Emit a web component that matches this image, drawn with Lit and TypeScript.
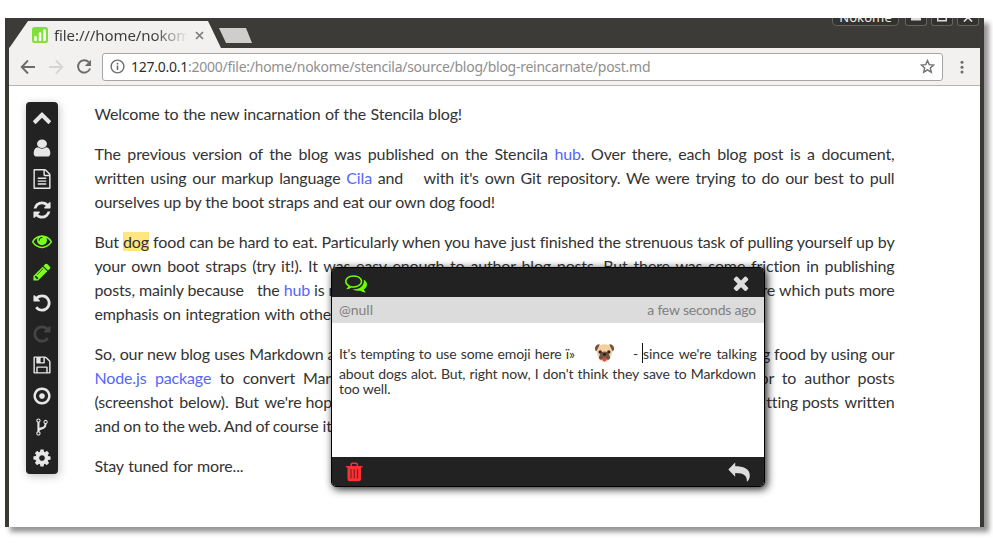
import { LitElement, html, css, svg } from "lit";
import { customElement } from "lit/decorators.js";
import { classMap } from "lit/directives/class-map.js";
import { styleMap } from "lit/directives/style-map.js";

const ICONS: Record<string, string> = {
  up: "M1683 1331l-166 165q-19 19-45 19t-45-19l-531-531-531 531q-19 19-45 19t-45-19l-166-165q-19-19-19-45.5t19-45.5l742-741q19-19 45-19t45 19l742 741q19 19 19 45.5t-19 45.5z",
  user: "M1536 1399q0 109-62.5 187t-150.5 78h-854q-88 0-150.5-78t-62.5-187q0-85 8.5-160.5t31.5-152 58.5-131 94-89 134.5-34.5q131 128 313 128t313-128q76 0 134.5 34.5t94 89 58.5 131 31.5 152 8.5 160.5zm-256-887q0 159-112.5 271.5t-271.5 112.5-271.5-112.5-112.5-271.5 112.5-271.5 271.5-112.5 271.5 112.5 112.5 271.5z",
  file: "M1596 380q28 28 48 76t20 88v1152q0 40-28 68t-68 28h-1344q-40 0-68-28t-28-68v-1600q0-40 28-68t68-28h896q40 0 88 20t76 48zm-444-244v376h376q-10-29-22-41l-313-313q-12-12-41-22zm384 1528v-1024h-416q-40 0-68-28t-28-68v-416h-768v1536h1280zm-1024-864q0-14 9-23t23-9h704q14 0 23 9t9 23v64q0 14-9 23t-23 9h-704q-14 0-23-9t-9-23v-64zm736 224q14 0 23 9t9 23v64q0 14-9 23t-23 9h-704q-14 0-23-9t-9-23v-64q0-14 9-23t23-9h704zm0 256q14 0 23 9t9 23v64q0 14-9 23t-23 9h-704q-14 0-23-9t-9-23v-64q0-14 9-23t23-9h704z",
  refresh: "M1639 1056q0 5-1 7-64 268-268 434.5t-478 166.5q-146 0-282.5-55t-243.5-157l-129 129q-19 19-45 19t-45-19-19-45v-448q0-26 19-45t45-19h448q26 0 45 19t19 45-19 45l-137 137q71 66 161 102t187 36q134 0 250-65t186-179q11-17 53-117 8-23 30-23h192q13 0 22.5 9.5t9.5 22.5zm25-800v448q0 26-19 45t-45 19h-448q-26 0-45-19t-19-45 19-45l138-138q-148-137-349-137-134 0-250 65t-186 179q-11 17-53 117-8 23-30 23h-199q-13 0-22.5-9.5t-9.5-22.5v-7q65-268 270-434.5t480-166.5q146 0 284 55.5t245 156.5l130-129q19-19 45-19t45 19 19 45z",
  eye: "M1664 960q-152-236-381-353 61 104 61 225 0 185-131.5 316.5t-316.5 131.5-316.5-131.5-131.5-316.5q0-121 61-225-229 117-381 353 133 205 333.5 326.5t434.5 121.5 434.5-121.5 333.5-326.5zm-720-384q0-20-14-34t-34-14q-125 0-214.5 89.5t-89.5 214.5q0 20 14 34t34 14 34-14 14-34q0-86 61-147t147-61q20 0 34-14t14-34zm848 384q0 34-20 69-140 230-376.5 368.5t-499.5 138.5-499.5-139-376.5-368q-20-35-20-69t20-69q140-229 376.5-368t499.5-139 499.5 139 376.5 368q20 35 20 69z",
  pencil: "M491 1536l91-91-235-235-91 91v107h128v128h107zm523-928q0-22-22-22-10 0-17 7l-542 542q-7 7-7 17 0 22 22 22 10 0 17-7l542-542q7-7 7-17zm-54-192l416 416-832 832h-416v-416zm683 96q0 53-37 90l-166 166-416-416 166-165q36-38 90-38 53 0 91 38l235 234q37 39 37 91z",
  undo: "M1664 896q0 156-61 298t-164 245-245 164-298 61q-172 0-327-72.5t-264-204.5q-7-10-6.5-22.5t8.5-20.5l137-138q10-9 25-9 16 2 23 12 73 95 179 147t225 52q104 0 198.5-40.5t163.5-109.5 109.5-163.5 40.5-198.5-40.5-198.5-109.5-163.5-163.5-109.5-198.5-40.5q-98 0-188 35.5t-160 101.5l137 138q31 30 14 69-17 40-59 40h-448q-26 0-45-19t-19-45v-448q0-42 40-59 39-17 69 14l130 129q107-101 244.5-156.5t284.5-55.5q156 0 298 61t245 164 164 245 61 298z",
  save: "M512 1536h768v-384h-768v384zm896 0h128v-896q0-14-10-38.5t-20-34.5l-281-281q-10-10-34-20t-39-10v416q0 40-28 68t-68 28h-576q-40 0-68-28t-28-68v-416h-128v1280h128v-416q0-40 28-68t68-28h832q40 0 68 28t28 68v416zm-384-928v-320q0-13-9.5-22.5t-22.5-9.5h-192q-13 0-22.5 9.5t-9.5 22.5v320q0 13 9.5 22.5t22.5 9.5h192q13 0 22.5-9.5t9.5-22.5zm640 32v928q0 40-28 68t-68 28h-1344q-40 0-68-28t-28-68v-1344q0-40 28-68t68-28h928q40 0 88 20t76 48l280 280q28 28 48 76t20 88z",
  dot: "M1152 896q0 106-75 181t-181 75-181-75-75-181 75-181 181-75 181 75 75 181zm-256-544q-148 0-273 73t-198 198-73 273 73 273 198 198 273 73 273-73 198-198 73-273-73-273-198-198-273-73zm768 544q0 209-103 385.5t-279.5 279.5-385.5 103-385.5-103-279.5-279.5-103-385.5 103-385.5 279.5-279.5 385.5-103 385.5 103 279.5 279.5 103 385.5z",
  fork: "M672 1472q0-40-28-68t-68-28-68 28-28 68 28 68 68 28 68-28 28-68zm0-1152q0-40-28-68t-68-28-68 28-28 68 28 68 68 28 68-28 28-68zm640 128q0-40-28-68t-68-28-68 28-28 68 28 68 68 28 68-28 28-68zm96 0q0 52-26 96.5t-70 69.5q-2 287-226 414-67 38-203 81-128 40-169.5 71t-41.5 100v26q44 25 70 69.5t26 96.5q0 80-56 136t-136 56-136-56-56-136q0-52 26-96.5t70-69.5v-820q-44-25-70-69.5t-26-96.5q0-80 56-136t136-56 136 56 56 136q0 52-26 96.5t-70 69.5v497q54-26 154-57 55-17 87.5-29.5t70.5-31 59-39.5 40.5-51 28-69.5 8.5-91.5q-44-25-70-69.5t-26-96.5q0-80 56-136t136-56 136 56 56 136z",
  cog: "M1152 896q0-106-75-181t-181-75-181 75-75 181 75 181 181 75 181-75 75-181zm512-109v222q0 12-8 23t-20 13l-185 28q-19 54-39 91 35 50 107 138 10 12 10 25t-9 23q-27 37-99 108t-94 71q-12 0-26-9l-138-108q-44 23-91 38-16 136-29 186-7 28-36 28h-222q-14 0-24.5-8.5t-11.5-21.5l-28-184q-49-16-90-37l-141 107q-10 9-25 9-14 0-25-11-126-114-165-168-7-10-7-23 0-12 8-23 15-21 51-66.5t54-70.5q-27-50-41-99l-183-27q-13-2-21-12.5t-8-23.5v-222q0-12 8-23t19-13l186-28q14-46 39-92-40-57-107-138-10-12-10-24 0-10 9-23 26-36 98.5-107.5t94.5-71.5q13 0 26 10l138 107q44-23 91-38 16-136 29-186 7-28 36-28h222q14 0 24.5 8.5t11.5 21.5l28 184q49 16 90 37l142-107q9-9 24-9 13 0 25 10 129 119 165 170 7 8 7 22 0 12-8 23-15 21-51 66.5t-54 70.5q26 50 41 98l183 28q13 2 21 12.5t8 23.5z",
  comments: "M704 384q-153 0-286 52t-211.5 141-78.5 191q0 82 53 158t149 132l97 56-35 84q34-20 62-39l44-31 53 10q78 14 153 14 153 0 286-52t211.5-141 78.5-191-78.5-191-211.5-141-286-52zm0-128q191 0 353.5 68.5t256.5 186.5 94 257-94 257-256.5 186.5-353.5 68.5q-86 0-176-16-124 88-278 128-36 9-86 16h-3q-11 0-20.5-8t-11.5-21q-1-3-1-6.5t.5-6.5 2-6l2.5-5 3.5-5.5 4-5 4.5-5 4-4.5q5-6 23-25t26-29.5 22.5-29 25-38.5 20.5-44q-124-72-195-177t-71-224q0-139 94-257t256.5-186.5 353.5-68.5zm822 1169q10 24 20.5 44t25 38.5 22.5 29 26 29.5 23 25q1 1 4 4.5t4.5 5 4 5 3.5 5.5l2.5 5 2 6 .5 6.5-1 6.5q-3 14-13 22t-22 7q-50-7-86-16-154-40-278-128-90 16-176 16-271 0-472-132 58 4 88 4 161 0 309-45t264-129q125-92 192-212t67-254q0-77-23-152 129 71 204 178t75 230q0 120-71 224.5t-195 176.5z",
  times: "M1490 1322q0 40-28 68l-136 136q-28 28-68 28t-68-28l-294-294-294 294q-28 28-68 28t-68-28l-136-136q-28-28-28-68t28-68l294-294-294-294q-28-28-28-68t28-68l136-136q28-28 68-28t68 28l294 294 294-294q28-28 68-28t68 28l136 136q28 28 28 68t-28 68l-294 294 294 294q28 28 28 68z",
};

const TOOLS: Array<{ icon: string; kind?: string }> = [
  { icon: "up" },
  { icon: "user", kind: "wide" },
  { icon: "file" },
  { icon: "refresh" },
  { icon: "eye", kind: "active" },
  { icon: "pencil", kind: "active" },
  { icon: "undo" },
  { icon: "undo", kind: "redo" },
  { icon: "save" },
  { icon: "dot" },
  { icon: "fork" },
  { icon: "cog" },
];

const icon = (name: string, size = 20, kind = "") => html`<svg
  class=${classMap({ icon: true, [kind || "plain"]: true })}
  width=${size}
  height=${size}
  viewBox="0 0 1792 1792"
><path d=${ICONS[name]}></path></svg>`;

/* A run of words stretched to a measured width. */
const run = (width: number, content: unknown) =>
  html`<span class="run" style=${styleMap({ width: `${width}px` })}>${content}</span>`;

const gap = (width: number) =>
  html`<span class="gap" style=${styleMap({ width: `${width}px` })}></span>`;

const pug = svg`
  <path d="M4 3Q10 -.5 16 3Q18.500 7 17 12Q15.500 18.500 10 19Q4.500 18.500 3 12Q1.500 7 4 3Z" fill="#f3cfa0"/>
  <path d="M5.300 1.400Q1.800 .8 .4 5Q.2 7.800 1.800 8.400Q3.600 5 5.300 1.400ZM14.700 1.400Q18.200 .8 19.600 5Q19.800 7.800 18.200 8.400Q16.400 5 14.700 1.400Z" fill="#7b5237"/>
  <path d="M10 8.500Q13 8.500 14.500 11.500Q16.500 15 14.500 16.500Q12 17 10 15.500Q8 17 5.500 16.500Q3.500 15 5.500 11.500Q7 8.500 10 8.500Z" fill="#6b5548"/>
  <circle cx="5.700" cy="9" r="1.700" fill="#35261f"/>
  <circle cx="14.300" cy="9" r="1.700" fill="#35261f"/>
  <path d="M8 10.600Q10 9.800 12 10.600Q11.600 12.600 10 12.800Q8.400 12.600 8 10.600Z" fill="#241a18"/>
  <path d="M8 15Q10 13.300 12 15V16.500Q11.500 18.400 10 18.400Q8.500 18.400 8 16.500Z" fill="#f0414b"/>`;

@customElement("app-root")
export class AppRoot extends LitElement {
  static styles = css`
    :host {
      display: block;
      width: 993px;
      height: 549px;
      box-sizing: border-box;
      padding: 18px 9px 22px 5px;
      background: #fff;
      overflow: hidden;
      position: relative;
    }
    * {
      box-sizing: border-box;
    }
    svg {
      display: block;
      flex: none;
    }
    .window {
      height: 509px;
      display: flex;
      flex-direction: column;
      background: #fff;
      border: solid #3a3935;
      border-width: 0 4px;
      box-shadow: 5px 5px 5px rgba(0, 0, 0, 0.42);
    }
    .titlebar {
      height: 30px;
      flex: none;
      background: #3c3b37;
      display: flex;
      margin: 0 -1px;
      font-family: "Noto Sans", sans-serif;
    }
    .tab {
      width: 213px;
      height: 27px;
      margin: 3px 0 0 1px;
      padding: 1px 18px 0 23px;
      background: #f2f1f0;
      clip-path: polygon(0 100%, 1px 96%, 19px 0, 199px 0, 212px 100%);
      display: flex;
      align-items: center;
    }
    .title {
      width: 134px;
      margin: -1px 0 0 6px;
      font-size: 15px;
      line-height: 24px;
      letter-spacing: -0.1px;
      color: #3c3c3c;
      white-space: nowrap;
      overflow: hidden;
      -webkit-mask-image: linear-gradient(90deg, #000 100px, transparent 134px);
    }
    .close {
      margin-left: 7px;
    }
    .newtab {
      width: 33px;
      height: 15px;
      margin: 10px 0 0 -3px;
      background: #cfcecd;
      clip-path: polygon(0 0, 27px 0, 33px 100%, 7px 100%);
    }
    .controls {
      margin-left: auto;
      padding-right: 2px;
      display: flex;
      gap: 4px;
      height: 8px;
      overflow: hidden;
    }
    .ctl {
      width: 22px;
      height: 8px;
      border: 1px solid #65635d;
      border-top: 0;
      border-radius: 0 0 3px 3px;
      display: flex;
      justify-content: center;
      background: #33322e;
      overflow: hidden;
    }
    .ctl.name {
      width: 67px;
      margin-right: 2px;
      border-radius: 0 0 5px 5px;
      color: #eee;
      font-size: 13px;
      line-height: 18px;
      letter-spacing: 0.1px;
      align-items: flex-end;
    }
    .ctl.name span {
      height: 18px;
      margin-bottom: -1px;
    }
    .toolbar {
      height: 38px;
      flex: none;
      background: #f2f1f0;
      border-bottom: 1px solid #b6b4b0;
      display: flex;
      align-items: center;
      padding: 0 11px;
    }
    .nav {
      margin-right: 12px;
    }
    .address {
      width: 841px;
      height: 28px;
      margin-right: 12px;
      margin-left: -2px;
      padding: 0 7px;
      border: 1px solid #a6a6a6;
      border-radius: 3px;
      background: #fff;
      display: flex;
      align-items: center;
      font: 14px/24px "Noto Sans", sans-serif;
      letter-spacing: -0.26px;
      color: #8f8f8f;
      white-space: nowrap;
    }
    .url {
      margin: 0 0 0 6px;
      flex: 1;
    }
    .url b {
      font-weight: 400;
      color: #2e2e2e;
    }
    .page {
      flex: 1;
      display: flex;
      align-items: flex-start;
      padding: 16px 0 0 17px;
      overflow: hidden;
    }
    .tools {
      width: 32px;
      height: 372px;
      padding: 5px 0 0;
      border-radius: 4px;
      background: #222;
      box-shadow: 1px 2px 8px rgba(0, 0, 0, 0.25);
      display: flex;
      flex-direction: column;
      align-items: center;
      gap: 11px;
      color: #e6e6e6;
    }
    .icon {
      fill: currentColor;
    }
    .wide {
      transform: scaleX(1.160);
    }
    .active {
      color: #7cff1a;
    }
    .redo {
      transform: scaleX(-1);
      color: #444;
    }
    .article {
      width: 800px;
      margin-left: 36.500px;
      font: 16px/24px Lato, sans-serif;
      letter-spacing: -0.15px;
      color: #333;
      white-space: nowrap;
    }
    .para {
      margin-bottom: 16px;
    }
    .line {
      height: 24px;
      display: flex;
      justify-content: space-between;
    }
    .line.last {
      justify-content: flex-start;
    }
    .run {
      display: inline-block;
      height: 1lh;
      vertical-align: top;
      text-align: justify;
      text-align-last: justify;
      white-space: normal;
      word-spacing: -1px;
    }
    .gap {
      display: inline-block;
    }
    .link {
      color: #5566fa;
    }
    .mark {
      background: #ffe680;
    }
    .dialog {
      position: absolute;
      left: 331px;
      top: 267px;
      width: 434px;
      height: 220px;
      border: 1px solid #000;
      border-radius: 5px;
      background: #fff;
      box-shadow: 2px 2px 8px rgba(0, 0, 0, 0.9);
      display: flex;
      flex-direction: column;
      overflow: hidden;
      font: 14px/16px Lato, sans-serif;
      letter-spacing: -0.1px;
      color: #333;
    }
    .bar {
      height: 29px;
      flex: none;
      background: #222;
      display: flex;
      align-items: center;
      justify-content: space-between;
      padding: 0 12px 0 13px;
      color: #ddd;
    }
    .bar.foot {
      padding: 0 14px;
    }
    .green {
      color: #6bff00;
    }
    .meta {
      height: 26px;
      flex: none;
      background: #dcdcdc;
      padding: 0 8px 0 7px;
      display: flex;
      justify-content: space-between;
      align-items: center;
      letter-spacing: -0.2px;
      color: #808080;
    }
    .handle {
      letter-spacing: 0;
    }
    .comment {
      flex: 1;
      padding: 20px 7px 0;
    }
    .row {
      display: flex;
      height: 15px;
      line-height: 15px;
      white-space: nowrap;
    }
    .row.first {
      height: 23px;
      line-height: 22px;
    }
    .emoji {
      margin: 0 18px 0 19px;
    }
    .caret {
      width: 1px;
      height: 20px;
      background: #111;
      margin-left: 4px;
    }
  `;

  render() {
    return html`
      <div class="window">
        ${this.renderTitlebar()} ${this.renderToolbar()}
        <div class="page">
          <div class="tools">${TOOLS.map((t) => icon(t.icon, 20, t.kind))}</div>
          ${this.renderArticle()}
        </div>
      </div>
      ${this.renderDialog()}
    `;
  }

  private renderTitlebar() {
    return html`<div class="titlebar">
      <div class="tab">
        <svg width="16" height="16" viewBox="0 0 16 16">
          <rect width="16" height="16" rx="2.500" fill="#7fe03a" />
          <path d="M3.500 13V10.200M8 13V6.500M12.500 13V3.500" stroke="#fff" stroke-width="2.600" stroke-linecap="round" />
        </svg>
        <span class="title">file:///home/nokome</span>
        <svg class="close" width="9" height="9" viewBox="0 0 9 9">
          <path d="M1 1L8 8M8 1L1 8" stroke="#7c7c7c" stroke-width="1.700" />
        </svg>
      </div>
      <div class="newtab"></div>
      <div class="controls">
        <div class="ctl name"><span>Nokome</span></div>
        <div class="ctl"><svg width="10" height="3"><rect width="10" height="2.500" fill="#ddd" /></svg></div>
        <div class="ctl"><svg width="10" height="4"><path d="M.75 0V2.750H9.250V0" fill="none" stroke="#ddd" stroke-width="1.500" /></svg></div>
        <div class="ctl"><svg width="10" height="4"><path d="M1 3.500L5 -.5L9 3.500" fill="none" stroke="#ddd" stroke-width="1.700" /></svg></div>
      </div>
    </div>`;
  }

  private renderToolbar() {
    return html`<div class="toolbar">
      <svg class="nav" width="16" height="16" viewBox="0 0 16 16" fill="none" stroke="#6b6b6b" stroke-width="1.900">
        <path d="M15 8H2.500M8 1.500L1.700 8L8 14.500" />
      </svg>
      <svg class="nav" width="16" height="16" viewBox="0 0 16 16" fill="none" stroke="#d6d5d4" stroke-width="1.900">
        <path d="M1 8H13.500M8 1.500L14.300 8L8 14.500" />
      </svg>
      <svg class="nav" width="16" height="16" viewBox="0 0 16 16">
        <path d="M12.800 3.200A6.200 6.200 0 1 0 14.100 9.500" fill="none" stroke="#6b6b6b" stroke-width="1.900" />
        <path d="M15 .8V7H8.800Z" fill="#6b6b6b" />
      </svg>
      <div class="address">
        <svg width="15" height="15" viewBox="0 0 15 15">
          <circle cx="7.500" cy="7.500" r="6.400" fill="none" stroke="#6b6b6b" stroke-width="1.400" />
          <path d="M7.500 6.600V11M7.500 3.800V5.400" stroke="#6b6b6b" stroke-width="1.600" />
        </svg>
        <span class="url"><b>127.0.0.1</b>:2000/file:/home/nokome/stencila/source/blog/blog-reincarnate/post.md</span>
        <svg width="15" height="15" viewBox="0 0 15 15">
          <path d="M7.500 1.600L9.200 5.600L13.600 6L10.300 8.900L11.300 13.200L7.500 10.900L3.700 13.200L4.700 8.900L1.400 6L5.800 5.600Z" fill="none" stroke="#707070" stroke-width="1.400" />
        </svg>
      </div>
      <svg width="14" height="14" viewBox="0 0 14 14" fill="#6b6b6b">
        <circle cx="7" cy="2.300" r="1.500" /><circle cx="7" cy="7.200" r="1.500" /><circle cx="7" cy="12.100" r="1.500" />
      </svg>
    </div>`;
  }

  private renderArticle() {
    return html`<div class="article">
      <div class="para">${run(367.5, "Welcome to the new incarnation of the Stencila blog!")}</div>
      <div class="para">
        <div class="line">${run(800, html`The previous version of the blog was published on the Stencila <span class="link">hub</span>. Over there, each blog post is a document,`)}</div>
        <div class="line">${run(800, html`written using our markup language <span class="link">Cila</span> and ${gap(9)} with it's own Git repository. We were trying to do our best to pull`)}</div>
        <div class="line last">${run(400.5, "ourselves up by the boot straps and eat our own dog food!")}</div>
      </div>
      <div class="para">
        <div class="line">${run(800, html`But <span class="mark">dog</span> food can be hard to eat. Particularly when you have just finished the strenuous task of pulling yourself up by`)}</div>
        <div class="line">${run(800, html`your own boot straps (try it!). It was easy enough to author blog posts. But there was some friction in publishing`)}</div>
        <div class="line"><span>${run(230, html`posts, mainly because ${gap(5)} the <span class="link">hub</span> is`)} n</span><span>re ${run(115.5, "which puts more")}</span></div>
        <div class="line last">${run(236.5, "emphasis on integration with othe")}</div>
      </div>
      <div class="para">
        <div class="line"><span>${run(229, "So, our new blog uses Markdown")} a</span><span>g ${run(120.5, "food by using our")}</span></div>
        <div class="line"><span>${run(200.5, html`<span class="link">Node.js package</span> to convert`)}${gap(8)}Mar</span>${run(135, "or to author posts")}</div>
        <div class="line"><span>${run(207, "(screenshot below). But we're")} hop</span><span>tting ${run(92.5, "posts written")}</span></div>
        <div class="line last"><span>${run(224, "and on to the web. And of course")} it</span></div>
      </div>
      <div class="para">${run(149, "Stay tuned for more...")}</div>
    </div>`;
  }

  private renderDialog() {
    return html`<div class="dialog">
      <div class="bar">
        ${icon("comments", 22, "green")} ${icon("times", 22)}
      </div>
      <div class="meta"><span class="handle">@null</span><span>a few seconds ago</span></div>
      <div class="comment">
        <div class="row first">
          ${run(236, "It's tempting to use some emoji here ï»")}
          <svg class="emoji" width="21" height="20" viewBox="0 0 20 20">${pug}</svg>
          <span>-</span><span class="caret"></span>${run(113.5, "since we're talking")}
        </div>
        <div class="row">${run(417, "about dogs alot. But, right now, I don't think they save to Markdown")}</div>
        <div class="row">too well.</div>
      </div>
      <div class="bar foot">
        <svg width="17" height="20" viewBox="0 0 17 20" fill="none">
          <path d="M5.200 4V2.600Q5.200 1.300 6.500 1.300H10Q11.300 1.300 11.300 2.600V4" stroke="#ff3030" stroke-width="1.500" />
          <path d="M0 4H16.500V5.500H15V17Q15 19.300 12.800 19.300H3.700Q1.500 19.300 1.500 17V5.500H0Z" fill="#ff3030" />
          <path d="M5 7V16.500M8.250 7V16.500M11.500 7V16.500" stroke="#7a2222" stroke-width="1.200" />
        </svg>
        <svg width="22" height="20" viewBox="0 0 22 20" fill="#ddd">
          <path d="M.3 7.500L7.200 .4V4.300C15 4.300 21.800 6.500 21.800 13.500C21.800 16.500 20.500 18.500 18.900 19.800C19.200 14 16.500 11 7.200 11V14.800Z" />
        </svg>
      </div>
    </div>`;
  }
}
